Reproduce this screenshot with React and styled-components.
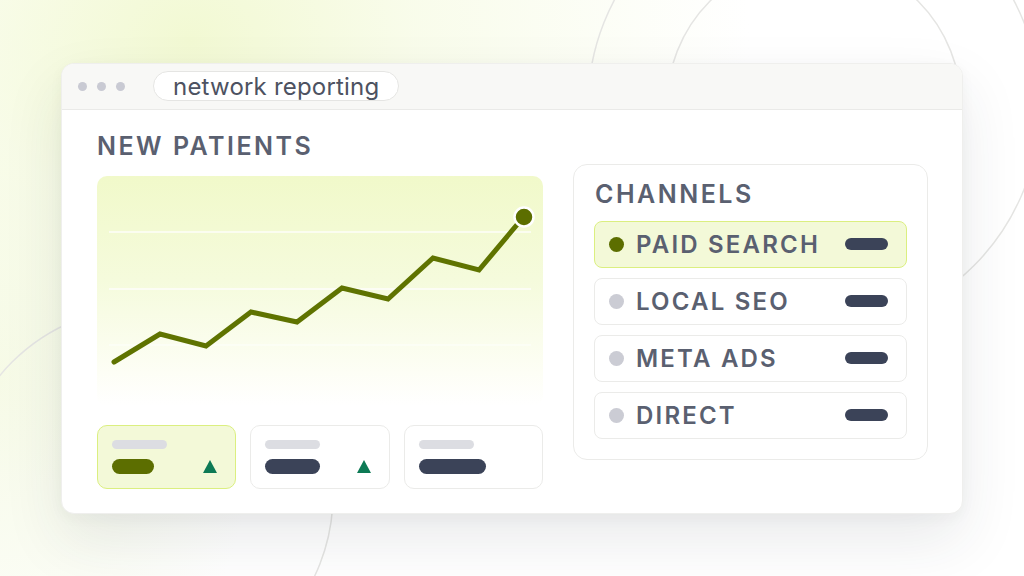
import React from "react";
import styled, { createGlobalStyle } from "styled-components";

const Global = createGlobalStyle`
  html, body { margin: 0; padding: 0; }
  body { font-family: Inter, "Noto Sans", sans-serif; background: #ffffff; }
  * { box-sizing: border-box; }
`;

const Page = styled.div`
  position: relative;
  width: 1024px;
  height: 576px;
  overflow: hidden;
  display: flex;
  align-items: center;
  justify-content: center;
  background:
    radial-gradient(ellipse 560px 460px at 190px 40px, #f2f9d3 0%, rgba(246, 251, 226, 0.7) 40%, rgba(255, 255, 255, 0) 100%),
    radial-gradient(ellipse 260px 400px at 0px 380px, rgba(244, 249, 226, 0.8) 0%, rgba(255, 255, 255, 0) 100%),
    #ffffff;
`;

const Backdrop = styled.svg`
  position: absolute;
  inset: 0;
  z-index: 0;
`;

const Window = styled.div`
  position: relative;
  z-index: 1;
  width: 902px;
  height: 451px;
  border-radius: 13px;
  background: #ffffff;
  border: 1px solid #efefed;
  box-shadow: 0 26px 60px rgba(40, 45, 60, 0.1), 0 4px 14px rgba(40, 45, 60, 0.04);
  display: flex;
  flex-direction: column;
  overflow: hidden;
`;

const TitleBar = styled.div`
  height: 46px;
  flex: none;
  background: #f8f8f6;
  border-bottom: 1px solid #eaeae8;
  display: flex;
  align-items: center;
  padding-left: 16px;
`;

const Dots = styled.div`
  display: flex;
  gap: 10px;
  margin-right: 28px;
`;

const Dot = styled.span`
  width: 9px;
  height: 9px;
  border-radius: 50%;
  background: #c9cad3;
`;

const Address = styled.div`
  height: 30px;
  padding: 0 19px;
  border: 1.5px solid #e5e5e3;
  border-radius: 15px;
  background: #ffffff;
  display: flex;
  align-items: center;
  font-size: 24px;
  font-weight: 400;
  color: #4d5261;
  letter-spacing: 0.2px;
`;

const Body = styled.div`
  flex: 1;
  display: grid;
  grid-template-columns: 446px 355px;
  column-gap: 30px;
  padding: 21px 35px 0 35px;
`;

const LeftCol = styled.div`
  display: flex;
  flex-direction: column;
`;

const Heading = styled.div`
  font-size: 25px;
  line-height: 30px;
  font-weight: 600;
  letter-spacing: 2.5px;
  color: #5a6070;
`;

const ChartBox = styled.div`
  margin-top: 15px;
  height: 230px;
  border-radius: 10px;
  background: linear-gradient(180deg, #f1f9ca 0%, #f5fbdc 45%, #fdfef5 85%, #ffffff 100%);
`;

const Cards = styled.div`
  margin-top: 19px;
  display: grid;
  grid-template-columns: repeat(3, 1fr);
  gap: 14px;
`;

const Card = styled.div`
  height: 64px;
  border-radius: 10px;
  border: 1.5px solid ${(p) => (p.$active ? "#dbef80" : "#ebebe9")};
  background: ${(p) => (p.$active ? "#f3f9d8" : "#ffffff")};
  padding: 14px 18px 0 14px;
  display: flex;
  flex-direction: column;
  gap: 10px;
`;

const LabelBar = styled.span`
  width: 55px;
  height: 9px;
  border-radius: 5px;
  background: #dcdde2;
`;

const ValueRow = styled.div`
  display: flex;
  align-items: center;
  justify-content: space-between;
`;

const ValueBar = styled.span`
  width: ${(p) => p.$w}px;
  height: 15px;
  border-radius: 8px;
  background: ${(p) => (p.$olive ? "#5c6e00" : "#3b4358")};
`;

const Up = styled.span`
  width: 0;
  height: 0;
  border-left: 7.5px solid transparent;
  border-right: 7.5px solid transparent;
  border-bottom: 13px solid #0d7a55;
`;

const RightCol = styled.div`
  padding-top: 33px;
`;

const Panel = styled.div`
  border: 1.5px solid #ebebe9;
  border-radius: 14px;
  padding: 14px 20px 20px 20px;
  display: flex;
  flex-direction: column;
  gap: 10px;
`;

const PanelTitle = styled(Heading)`
  padding-left: 1px;
  margin-bottom: 2px;
`;

const Row = styled.div`
  height: 47px;
  border-radius: 8px;
  border: 1.5px solid ${(p) => (p.$active ? "#dbef80" : "#ebebe9")};
  background: ${(p) => (p.$active ? "#f3f9d8" : "#ffffff")};
  display: flex;
  align-items: center;
  padding: 0 18px 0 14px;
`;

const Bullet = styled.span`
  width: 15px;
  height: 15px;
  border-radius: 50%;
  flex: none;
  background: ${(p) => (p.$active ? "#5c6e00" : "#cbccd4")};
`;

const RowLabel = styled.span`
  margin-left: 12px;
  flex: 1;
  font-size: 24px;
  font-weight: 600;
  letter-spacing: 2.2px;
  color: #5a6070;
`;

const RowBar = styled.span`
  width: 43px;
  height: 12px;
  border-radius: 6px;
  background: #3b4358;
`;

const pts = [
  [17, 186], [63, 158], [109, 170], [154, 136], [200, 146],
  [245, 112], [291, 123], [336, 82], [382, 94], [424, 44],
];

function Chart() {
  const d = pts.map((p, i) => (i ? "L" : "M") + p[0] + " " + p[1]).join(" ");
  return (
    <ChartBox>
      <svg width="446" height="230" viewBox="0 0 446 230">
        <line x1="12" y1="56" x2="434" y2="56" stroke="#ffffff" strokeWidth="1.5" opacity="0.9" />
        <line x1="12" y1="113" x2="434" y2="113" stroke="#ffffff" strokeWidth="1.5" opacity="0.9" />
        <line x1="12" y1="169" x2="434" y2="169" stroke="#ffffff" strokeWidth="1.5" opacity="0.6" />
        <path d={d} fill="none" stroke="#5f7300" strokeWidth="5" strokeLinejoin="miter" strokeLinecap="round" />
        <circle cx="427" cy="41" r="9.5" fill="#5c6e00" stroke="#ffffff" strokeWidth="2.5" />
      </svg>
    </ChartBox>
  );
}

const channels = [
  { name: "PAID SEARCH", active: true },
  { name: "LOCAL SEO" },
  { name: "META ADS" },
  { name: "DIRECT" },
];

export default function App() {
  return (
    <>
      <Global />
      <Page>
        <Backdrop width="1024" height="576" viewBox="0 0 1024 576">
          <g fill="none" stroke="#e5e5e3" strokeWidth="1.5">
            <circle cx="814" cy="106" r="226" />
            <circle cx="814" cy="105" r="147" />
            <circle cx="145" cy="495" r="188" />
          </g>
        </Backdrop>
        <Window>
          <TitleBar>
            <Dots>
              <Dot />
              <Dot />
              <Dot />
            </Dots>
            <Address>network reporting</Address>
          </TitleBar>
          <Body>
            <LeftCol>
              <Heading>NEW PATIENTS</Heading>
              <Chart />
              <Cards>
                <Card $active>
                  <LabelBar />
                  <ValueRow>
                    <ValueBar $olive $w={42} />
                    <Up />
                  </ValueRow>
                </Card>
                <Card>
                  <LabelBar />
                  <ValueRow>
                    <ValueBar $w={55} />
                    <Up />
                  </ValueRow>
                </Card>
                <Card>
                  <LabelBar />
                  <ValueRow>
                    <ValueBar $w={67} />
                  </ValueRow>
                </Card>
              </Cards>
            </LeftCol>
            <RightCol>
              <Panel>
                <PanelTitle>CHANNELS</PanelTitle>
                {channels.map((c) => (
                  <Row key={c.name} $active={c.active}>
                    <Bullet $active={c.active} />
                    <RowLabel>{c.name}</RowLabel>
                    <RowBar />
                  </Row>
                ))}
              </Panel>
            </RightCol>
          </Body>
        </Window>
      </Page>
    </>
  );
}
